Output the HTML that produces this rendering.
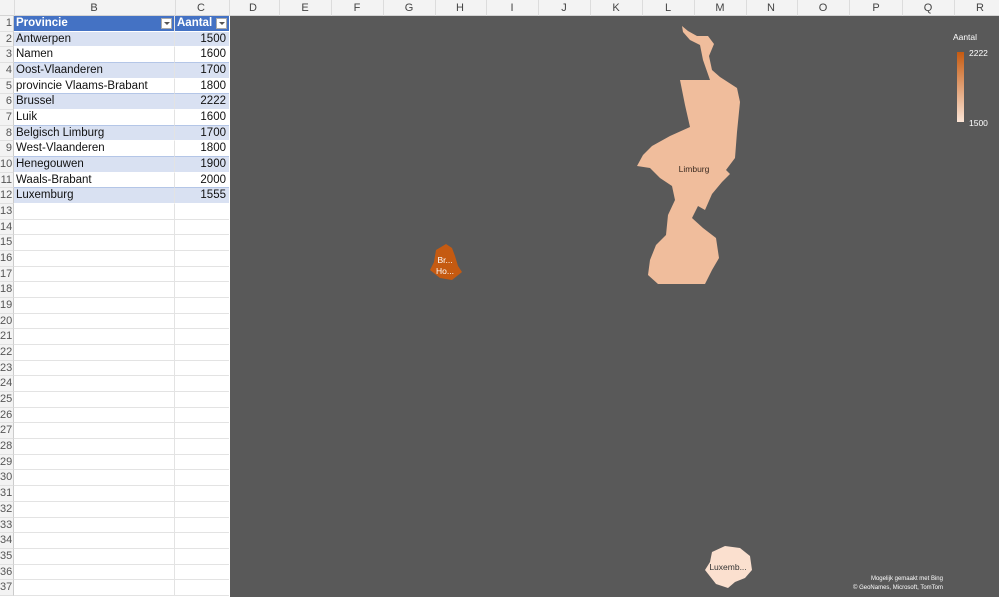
<!DOCTYPE html>
<html><head><meta charset="utf-8"><style>
*{margin:0;padding:0;box-sizing:border-box}
body{width:999px;height:597px;overflow:hidden;background:#fff;font-family:"Liberation Sans",sans-serif;position:relative}
.hdr{position:absolute;top:0;left:0;width:999px;height:16px;background:#f3f3f3;border-bottom:1px solid #d4d4d4}
.hdr span{position:absolute;top:2px;font-size:11px;color:#444;transform:translateX(-50%)}
.hdr i{position:absolute;top:0;width:1px;height:16px;background:#dcdcdc}
.grid{position:absolute;top:16px;left:0;width:230px}
.r{display:flex;height:15.68px;font-size:11.5px;line-height:15px;color:#111}
.n{width:14px;background:#f3f3f3;color:#555;font-size:11px;text-align:right;padding-right:1px;overflow:hidden;border-bottom:1px solid #e0e0e0;border-right:1px solid #ccc}
.b{width:161px;padding-left:2px;border-bottom:1px solid #e3e3e3;border-right:1px solid #e3e3e3;white-space:nowrap}
.c{width:54px;padding-right:3px;text-align:right;border-bottom:1px solid #e3e3e3}
.h .b,.h .c{background:#4472c4;color:#fff;font-weight:bold;border-bottom:1px solid #fff;position:relative}
.d .b,.d .c{background:#d9e1f2;border-bottom:1px solid #fff}
.w .b,.w .c{background:#fff;border-bottom:1px solid #b4c6e7}
.dd{position:absolute;right:2px;top:2px;width:11px;height:11px;background:#fff;border:1px solid #aaa}
.dd:after{content:"";position:absolute;left:2px;top:3px;border-left:3px solid transparent;border-right:3px solid transparent;border-top:3px solid #555}
.map{position:absolute;left:230px;top:16px;width:769px;height:581px;background:#595959}
</style></head><body>
<div class="hdr">
<span style="left:94px">B</span><span style="left:201px">C</span><span style="left:253px">D</span><span style="left:305px">E</span><span style="left:357px">F</span><span style="left:409px">G</span><span style="left:460px">H</span><span style="left:512px">I</span><span style="left:564px">J</span><span style="left:616px">K</span><span style="left:668px">L</span><span style="left:720px">M</span><span style="left:771px">N</span><span style="left:823px">O</span><span style="left:876px">P</span><span style="left:928px">Q</span><span style="left:980px">R</span>
<i style="left:14px"></i><i style="left:175px"></i><i style="left:229px"></i><i style="left:279px"></i><i style="left:331px"></i><i style="left:383px"></i><i style="left:435px"></i><i style="left:486px"></i><i style="left:538px"></i><i style="left:590px"></i><i style="left:642px"></i><i style="left:694px"></i><i style="left:746px"></i><i style="left:797px"></i><i style="left:849px"></i><i style="left:902px"></i><i style="left:954px"></i>
</div>
<div class="grid">
<div class="r h"><div class="n">1</div><div class="b">Provincie<span class="dd"></span></div><div class="c" style="text-align:left;padding-left:2px">Aantal<span class="dd"></span></div></div>
<div class="r d"><div class="n">2</div><div class="b">Antwerpen</div><div class="c">1500</div></div>
<div class="r w"><div class="n">3</div><div class="b">Namen</div><div class="c">1600</div></div>
<div class="r d"><div class="n">4</div><div class="b">Oost-Vlaanderen</div><div class="c">1700</div></div>
<div class="r w"><div class="n">5</div><div class="b">provincie Vlaams-Brabant</div><div class="c">1800</div></div>
<div class="r d"><div class="n">6</div><div class="b">Brussel</div><div class="c">2222</div></div>
<div class="r w"><div class="n">7</div><div class="b">Luik</div><div class="c">1600</div></div>
<div class="r d"><div class="n">8</div><div class="b">Belgisch Limburg</div><div class="c">1700</div></div>
<div class="r w"><div class="n">9</div><div class="b">West-Vlaanderen</div><div class="c">1800</div></div>
<div class="r d"><div class="n">10</div><div class="b">Henegouwen</div><div class="c">1900</div></div>
<div class="r w"><div class="n">11</div><div class="b">Waals-Brabant</div><div class="c">2000</div></div>
<div class="r d"><div class="n">12</div><div class="b">Luxemburg</div><div class="c">1555</div></div>
<div class="r"><div class="n">13</div><div class="b"></div><div class="c"></div></div>
<div class="r"><div class="n">14</div><div class="b"></div><div class="c"></div></div>
<div class="r"><div class="n">15</div><div class="b"></div><div class="c"></div></div>
<div class="r"><div class="n">16</div><div class="b"></div><div class="c"></div></div>
<div class="r"><div class="n">17</div><div class="b"></div><div class="c"></div></div>
<div class="r"><div class="n">18</div><div class="b"></div><div class="c"></div></div>
<div class="r"><div class="n">19</div><div class="b"></div><div class="c"></div></div>
<div class="r"><div class="n">20</div><div class="b"></div><div class="c"></div></div>
<div class="r"><div class="n">21</div><div class="b"></div><div class="c"></div></div>
<div class="r"><div class="n">22</div><div class="b"></div><div class="c"></div></div>
<div class="r"><div class="n">23</div><div class="b"></div><div class="c"></div></div>
<div class="r"><div class="n">24</div><div class="b"></div><div class="c"></div></div>
<div class="r"><div class="n">25</div><div class="b"></div><div class="c"></div></div>
<div class="r"><div class="n">26</div><div class="b"></div><div class="c"></div></div>
<div class="r"><div class="n">27</div><div class="b"></div><div class="c"></div></div>
<div class="r"><div class="n">28</div><div class="b"></div><div class="c"></div></div>
<div class="r"><div class="n">29</div><div class="b"></div><div class="c"></div></div>
<div class="r"><div class="n">30</div><div class="b"></div><div class="c"></div></div>
<div class="r"><div class="n">31</div><div class="b"></div><div class="c"></div></div>
<div class="r"><div class="n">32</div><div class="b"></div><div class="c"></div></div>
<div class="r"><div class="n">33</div><div class="b"></div><div class="c"></div></div>
<div class="r"><div class="n">34</div><div class="b"></div><div class="c"></div></div>
<div class="r"><div class="n">35</div><div class="b"></div><div class="c"></div></div>
<div class="r"><div class="n">36</div><div class="b"></div><div class="c"></div></div>
<div class="r"><div class="n">37</div><div class="b"></div><div class="c"></div></div>
</div>
<svg class="map" viewBox="230 16 769 581" xmlns="http://www.w3.org/2000/svg">
<defs><linearGradient id="g" x1="0" y1="0" x2="0" y2="1"><stop offset="0" stop-color="#c55a11"/><stop offset="1" stop-color="#fbe5d6"/></linearGradient></defs>
<path fill="#f0bd9c" d="M682,26 L688,31 L697,36 L708,36 L714,44 L709,56 L712,70 L720,77 L737,88 L740,102 L737,132 L735,158 L726,170 L730,174 L722,182 L712,194 L705,210 L698,206 L692,218 L703,228 L716,238 L719,258 L712,270 L705,284 L658,284 L648,275 L650,260 L656,245 L666,235 L668,215 L675,200 L672,186 L660,178 L650,168 L637,166 L643,155 L652,146 L670,136 L690,127 L685,105 L680,80 L710,80 L703,60 L700,45 L690,40 L683,32 Z"/>
<path fill="#c55a11" d="M436,250 L446,244 L452,248 L455,256 L458,266 L462,272 L452,280 L440,278 L430,270 L434,262 Z"/>
<path fill="#fbe0cf" d="M712,552 L725,546 L740,548 L750,556 L752,570 L745,578 L735,582 L728,588 L716,584 L705,570 L710,562 Z"/>
<g font-family="Liberation Sans,sans-serif" font-size="8.5">
<text x="694" y="172" fill="#3a2a20" text-anchor="middle">Limburg</text>
<text x="445" y="263" fill="#fff" text-anchor="middle">Br...</text>
<text x="445" y="274" fill="#fff" text-anchor="middle">Ho...</text>
<text x="728" y="570" fill="#333" text-anchor="middle">Luxemb...</text>
<text x="965" y="40" fill="#fff" text-anchor="middle">Aantal</text>
<text x="969" y="56" fill="#fff">2222</text>
<text x="969" y="126" fill="#fff">1500</text>
</g>
<rect x="957" y="52" width="7" height="70" fill="url(#g)"/>
<g font-family="Liberation Sans,sans-serif" font-size="6" fill="#fff" text-anchor="end">
<text x="943" y="580">Mogelijk gemaakt met Bing</text>
<text x="943" y="589">© GeoNames, Microsoft, TomTom</text>
</g>
</svg>
</body></html>
